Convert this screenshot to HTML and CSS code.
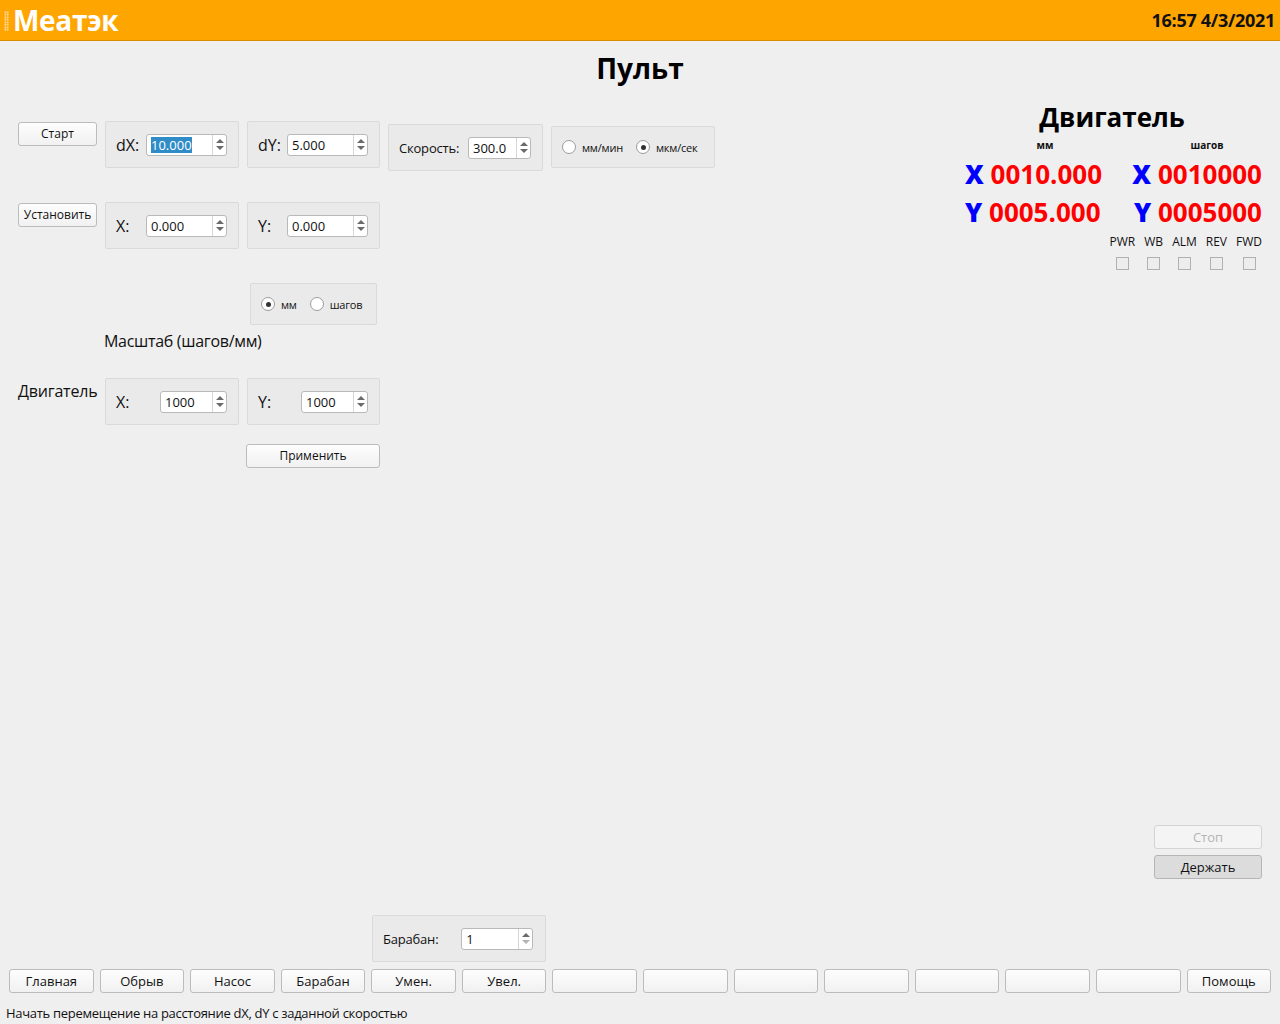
FILE: index.html
```html
<!DOCTYPE html>
<html lang="ru">
<head>
<meta charset="utf-8">
<title>Меатэк — Пульт</title>
<link rel="stylesheet" href="styles.css">
</head>
<body>
<header class="topbar">
  <div class="grip"></div>
  <div class="logo">Меатэк</div>
  <div class="clock">16:57 4/3/2021</div>
</header>

<main class="content">
  <h1 class="title">Пульт</h1>

  <div class="workspace">
    <section class="controls">
      <div class="row row-1">
        <button class="btn side-btn">Старт</button>
        <div class="group field w134">
          <span class="lbl">dX:</span>
          <div class="spin w81"><span class="val"><span class="sel">10.000</span></span><span class="arrows"><i class="up"></i><i class="dn"></i></span></div>
        </div>
        <div class="group field w133">
          <span class="lbl">dY:</span>
          <div class="spin w81"><span class="val">5.000</span><span class="arrows"><i class="up"></i><i class="dn"></i></span></div>
        </div>
        <div class="group field speed">
          <span class="lbl small">Скорость:</span>
          <div class="spin w63"><span class="val">300.0</span><span class="arrows"><i class="up"></i><i class="dn"></i></span></div>
        </div>
        <div class="group radios units">
          <span class="radio"></span><span class="rlbl">мм/мин</span>
          <span class="radio on"></span><span class="rlbl">мкм/сек</span>
        </div>
      </div>

      <div class="row row-2">
        <button class="btn side-btn">Установить</button>
        <div class="group field w134">
          <span class="lbl">X:</span>
          <div class="spin w81"><span class="val">0.000</span><span class="arrows"><i class="up"></i><i class="dn"></i></span></div>
        </div>
        <div class="group field w133">
          <span class="lbl">Y:</span>
          <div class="spin w81"><span class="val">0.000</span><span class="arrows"><i class="up"></i><i class="dn"></i></span></div>
        </div>
      </div>

      <div class="group radios scale-units">
        <span class="radio on"></span><span class="rlbl">мм</span>
        <span class="radio"></span><span class="rlbl">шагов</span>
      </div>

      <div class="scale-title">Масштаб (шагов/мм)</div>

      <div class="row row-3">
        <div class="side-lbl">Двигатель</div>
        <div class="group field w134">
          <span class="lbl">X:</span>
          <div class="spin w67"><span class="val">1000</span><span class="arrows"><i class="up"></i><i class="dn"></i></span></div>
        </div>
        <div class="group field w133">
          <span class="lbl">Y:</span>
          <div class="spin w67"><span class="val">1000</span><span class="arrows"><i class="up"></i><i class="dn"></i></span></div>
        </div>
      </div>

      <button class="btn apply">Применить</button>
    </section>

    <aside class="motor">
      <div class="motor-title">Двигатель</div>
      <div class="motor-grid">
        <div class="unit unit-mm">мм</div>
        <div class="unit unit-steps">шагов</div>
        <div class="num left"><b>X</b> 0010.000</div>
        <div class="num right"><b>X</b> 0010000</div>
        <div class="num left"><b>Y</b> 0005.000</div>
        <div class="num right"><b>Y</b> 0005000</div>
      </div>
      <div class="flags">
        <div class="flag"><span>PWR</span><i class="box"></i></div>
        <div class="flag"><span>WB</span><i class="box"></i></div>
        <div class="flag"><span>ALM</span><i class="box"></i></div>
        <div class="flag"><span>REV</span><i class="box"></i></div>
        <div class="flag"><span>FWD</span><i class="box"></i></div>
      </div>
    </aside>
  </div>

  <div class="actions">
    <button class="btn disabled">Стоп</button>
    <button class="btn pressed">Держать</button>
  </div>

  <div class="drum-row">
    <div class="group field drum">
      <span class="lbl small">Барабан:</span>
      <div class="spin w72"><span class="val">1</span><span class="arrows"><i class="up"></i><i class="dn dim"></i></span></div>
    </div>
  </div>
</main>

<nav class="bottombar">
  <button class="btn nav">Главная</button>
  <button class="btn nav">Обрыв</button>
  <button class="btn nav">Насос</button>
  <button class="btn nav">Барабан</button>
  <button class="btn nav">Умен.</button>
  <button class="btn nav">Увел.</button>
  <button class="btn nav"></button>
  <button class="btn nav"></button>
  <button class="btn nav"></button>
  <button class="btn nav"></button>
  <button class="btn nav"></button>
  <button class="btn nav"></button>
  <button class="btn nav"></button>
  <button class="btn nav">Помощь</button>
</nav>

<footer class="status">Начать перемещение на расстояние dX, dY с заданной скоростью</footer>
</body>
</html>
```

FILE: styles.css
```css
* { box-sizing: border-box; }

html, body {
  margin: 0;
  padding: 0;
}

body {
  width: 1280px;
  height: 1024px;
  background: #efefef;
  font-family: "Open Sans", "Noto Sans", "DejaVu Sans", sans-serif;
  color: #1a1a1a;
  display: flex;
  flex-direction: column;
  overflow: hidden;
}

/* ---------- header ---------- */
.topbar {
  height: 41px;
  flex: 0 0 41px;
  background: #ffa500;
  border-bottom: 1px solid #d98c00;
  display: flex;
  align-items: center;
  padding: 0 5px 0 4px;
}

.grip {
  width: 5px;
  height: 20px;
  margin-top: 1px;
  background-image: radial-gradient(circle, #ffd58a 0.8px, transparent 1.2px);
  background-size: 2.5px 2.5px;
}

.logo {
  margin-left: 4px;
  color: #fff;
  font-weight: 700;
  font-size: 28px;
  letter-spacing: -0.3px;
  line-height: 40px;
  margin-top: -1px;
}

.clock {
  margin-left: auto;
  font-weight: 700;
  font-size: 18px;
  color: #111;
  letter-spacing: -0.3px;
  line-height: 40px;
}

/* ---------- main ---------- */
.content {
  flex: 1 1 auto;
  display: flex;
  flex-direction: column;
}

.title {
  margin: 0;
  padding-top: 10px;
  height: 44px;
  text-align: center;
  font-size: 28px;
  line-height: 34px;
  font-weight: 700;
  color: #000;
}

.workspace {
  display: flex;
  align-items: flex-start;
}

.controls {
  padding-left: 18px;
  padding-top: 36px;
  display: flex;
  flex-direction: column;
  align-items: flex-start;
}

.row {
  display: flex;
  align-items: flex-start;
  gap: 8px;
}

.row-2 { margin-top: 31px; }
.row-3 { margin-top: 27px; }

/* ---------- buttons ---------- */
.btn {
  font-family: inherit;
  font-size: 12px;
  color: #111;
  height: 24px;
  padding: 0;
  border: 1px solid #bcbcbc;
  border-radius: 3px;
  background: linear-gradient(#fdfdfd, #f1f1f1);
  line-height: 22px;
  cursor: default;
}

.side-btn {
  width: 79px;
  margin-top: 1px;
}

.btn.apply {
  width: 134px;
  margin-left: 228px;
  margin-top: 19px;
}

.btn.disabled {
  color: #b4b4b4;
  border-color: #d4d4d4;
  background: #f4f4f4;
}

.btn.pressed {
  background: #dcdcdc;
  border-color: #b5b5b5;
}

/* ---------- group boxes ---------- */
.group {
  background: #eaeaea;
  border: 1px solid #dadada;
  border-radius: 2px;
}

.field {
  height: 47px;
  display: flex;
  align-items: center;
  justify-content: space-between;
  padding: 0 11px 0 10px;
}

.w134 { width: 134px; }
.w133 { width: 133px; }

.speed {
  width: 155px;
  margin-top: 3px;
}

.lbl {
  font-size: 16px;
  color: #111;
}

.lbl.small { font-size: 13px; letter-spacing: -0.2px; }

/* ---------- spin boxes ---------- */
.spin {
  height: 22px;
  background: #fff;
  border: 1px solid #b9b9b9;
  border-radius: 3px;
  display: flex;
  align-items: stretch;
}

.w81 { width: 81px; }
.w67 { width: 67px; }
.w63 { width: 63px; }
.w72 { width: 72px; }

.val {
  flex: 1 1 auto;
  font-size: 13px;
  line-height: 20px;
  padding-left: 4px;
  color: #111;
  white-space: nowrap;
  overflow: hidden;
}

.sel {
  background: #308cc6;
  color: #fff;
  display: inline-block;
  line-height: 16px;
}

.arrows {
  width: 14px;
  flex: 0 0 14px;
  border-left: 1px solid #d6d6d6;
  display: flex;
  flex-direction: column;
  align-items: center;
  justify-content: center;
  gap: 3px;
}

.arrows i {
  display: block;
  width: 0;
  height: 0;
  border-left: 4px solid transparent;
  border-right: 4px solid transparent;
}

.arrows .up { border-bottom: 4px solid #6a6a6a; }
.arrows .dn { border-top: 4px solid #6a6a6a; }
.arrows .dn.dim { border-top-color: #b4b4b4; }

/* ---------- radio groups ---------- */
.radios {
  height: 42px;
  display: flex;
  align-items: center;
  padding-left: 10px;
}

.units {
  width: 164px;
  margin-top: 5px;
}

.scale-units {
  width: 127px;
  margin-left: 232px;
  margin-top: 34px;
}

.radio {
  width: 14px;
  height: 14px;
  border-radius: 50%;
  border: 1px solid #9c9c9c;
  background: #fff;
  position: relative;
  flex: 0 0 14px;
}

.radio.on::after {
  content: "";
  position: absolute;
  left: 3.5px;
  top: 3.5px;
  width: 5px;
  height: 5px;
  border-radius: 50%;
  background: #333;
}

.rlbl {
  font-size: 11px;
  color: #111;
  margin-left: 6px;
  margin-right: 13px;
  letter-spacing: -0.2px;
}

.scale-title {
  font-size: 16px;
  line-height: 20px;
  margin-left: 86px;
  margin-top: 6px;
  color: #111;
  letter-spacing: -0.3px;
}

.side-lbl {
  width: 79px;
  font-size: 16px;
  line-height: 20px;
  margin-top: 3px;
  color: #111;
  white-space: nowrap;
  letter-spacing: -0.2px;
}

/* ---------- motor panel ---------- */
.motor {
  margin-left: auto;
  margin-right: 18px;
  width: 300px;
  padding-top: 16px;
}

.motor-title {
  text-align: center;
  font-weight: 700;
  font-size: 26px;
  line-height: 32px;
  color: #000;
}

.motor-grid {
  display: grid;
  grid-template-columns: 166px 134px;
  margin-top: 6px;
}

.unit {
  font-size: 10px;
  font-weight: 700;
  line-height: 12px;
  color: #111;
}

.unit-mm { text-align: center; }
.unit-steps { text-align: center; padding-left: 24px; margin-bottom: 4px; }

.num {
  font-size: 26px;
  font-weight: 700;
  line-height: 38px;
  color: #ff0000;
  white-space: nowrap;
}

.num b { color: #0000ff; }
.num.left { padding-left: 3px; }
.num.right { text-align: right; }

.flags {
  display: flex;
  justify-content: flex-end;
  gap: 9px;
  margin-top: 4px;
}

.flag {
  display: flex;
  flex-direction: column;
  align-items: center;
  font-size: 12px;
  line-height: 14px;
  color: #111;
}

.flag .box {
  display: block;
  width: 13px;
  height: 13px;
  margin-top: 8px;
  border: 1px solid #b0b0b0;
  background: #ededed;
}

/* ---------- bottom area ---------- */
.actions {
  margin-top: auto;
  align-self: flex-end;
  margin-right: 18px;
  display: flex;
  flex-direction: column;
  gap: 6px;
}

.actions .btn {
  width: 108px;
  font-size: 13px;
}

.drum-row {
  margin-top: 36px;
  padding-left: 372px;
}

.drum {
  width: 174px;
  justify-content: flex-start;
  gap: 23px;
}

.bottombar {
  flex: 0 0 auto;
  display: flex;
  gap: 6px;
  padding: 7px 9px 10px;
}

.btn.nav {
  flex: 1 1 0;
  font-size: 13px;
}

.status {
  height: 21px;
  flex: 0 0 21px;
  padding-left: 6px;
  font-size: 13px;
  line-height: 21px;
  color: #111;
  letter-spacing: -0.3px;
}
```
